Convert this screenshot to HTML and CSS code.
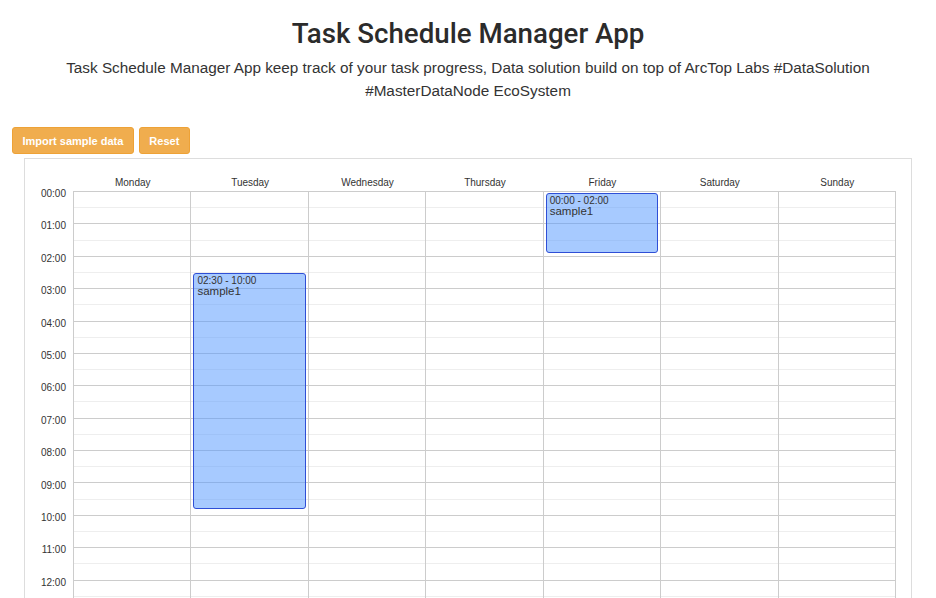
FILE: index.html
```html
<!DOCTYPE html>
<html lang="en">
<head>
<meta charset="utf-8">
<title>Task Schedule Manager App</title>
<link rel="stylesheet" href="styles.css">
</head>
<body>
<div class="page">
  <header class="intro">
    <h1 class="title">Task Schedule Manager App</h1>
    <p class="subtitle">Task Schedule Manager App keep track of your task progress, Data solution build on top of ArcTop Labs #DataSolution #MasterDataNode EcoSystem</p>
  </header>
  <div class="toolbar">
    <button class="btn btn-warning">Import sample data</button>
    <button class="btn btn-warning">Reset</button>
  </div>
  <section class="calendar">
    <div class="cal-head">
      <div class="corner"></div>
      <div class="day-names">
        <div class="day-name">Monday</div>
        <div class="day-name">Tuesday</div>
        <div class="day-name">Wednesday</div>
        <div class="day-name">Thursday</div>
        <div class="day-name">Friday</div>
        <div class="day-name">Saturday</div>
        <div class="day-name">Sunday</div>
      </div>
    </div>
    <div class="cal-body">
      <div class="times" id="times"></div>
      <div class="days" id="days"></div>
    </div>
  </section>
</div>
<script src="app.js"></script>
</body>
</html>
```
FILE: styles.css
```css
* { box-sizing: border-box; }
html, body { margin: 0; padding: 0; background: #fff; }
body {
  font-family: "Liberation Sans", Arial, Helvetica, sans-serif;
  color: #333;
}
.page { padding: 0 12px; }
.intro { text-align: center; }
.title {
  margin: 18px 0 0;
  font-family: Roboto, "Liberation Sans", sans-serif;
  font-weight: 500;
  font-size: 27.7px;
  line-height: 31px;
  color: #2b2b2b;
}
.subtitle {
  margin: 7px 0 0;
  font-size: 15.3px;
  line-height: 23px;
  color: #333;
}
.toolbar {
  margin-top: 25px;
  display: flex;
  gap: 5px;
}
.btn {
  height: 27px;
  padding: 0 9.5px;
  font-family: "Liberation Sans", Arial, sans-serif;
  font-size: 11px;
  font-weight: 700;
  color: #fff;
  border-radius: 3px;
  cursor: pointer;
}
.btn-warning {
  background: #f0ad4e;
  border: 1px solid #eea236;
}
.calendar {
  margin: 4px 12px 0;
  border: 1px solid #ddd;
  border-bottom: none;
  padding-right: 15px;
}
.cal-head {
  display: flex;
  height: 32px;
}
.corner { width: 49px; flex: none; }
.day-names {
  flex: 1;
  display: grid;
  grid-template-columns: repeat(7, 1fr);
  align-items: end;
  padding-bottom: 2px;
}
.day-name {
  text-align: center;
  font-size: 10px;
  line-height: 12px;
  color: #333;
}
.cal-body {
  display: flex;
}
.times {
  width: 48px;
  flex: none;
  margin-top: -3px;
}
.time-label {
  height: 32.4px;
  padding-right: 7px;
  text-align: right;
  font-size: 10px;
  line-height: 12px;
  color: #333;
}
.days {
  flex: 1;
  display: grid;
  grid-template-columns: repeat(7, 1fr);
  border-top: 1px solid #ccc;
  border-left: 1px solid #ccc;
}
.day-col {
  position: relative;
  border-right: 1px solid #ccc;
}
.slot {
  height: 16.2px;
  border-bottom: 1px solid #eee;
}
.slot.hour-end { border-bottom-color: #ccc; }
.event {
  position: absolute;
  left: 2px;
  right: 2px;
  background: rgba(80, 150, 255, 0.5);
  border: 1px solid #2f4fd6;
  border-radius: 3px;
  padding: 1px 3px;
  color: #333;
  overflow: hidden;
}
.event-time { font-size: 10px; line-height: 11px; }
.event-title { font-size: 11.5px; line-height: 11px; }
```
FILE: app.js
```js
(function () {
  var times = document.getElementById('times');
  var days = document.getElementById('days');
  var pad = function (n) { return (n < 10 ? '0' : '') + n; };
  for (var h = 0; h < 13; h++) {
    var t = document.createElement('div');
    t.className = 'time-label';
    t.textContent = pad(h) + ':00';
    times.appendChild(t);
  }
  var events = {
    1: [{ start: '02:30', end: '10:00', title: 'sample1', top: 81, height: 236 }],
    4: [{ start: '00:00', end: '02:00', title: 'sample1', top: 1, height: 60 }]
  };
  for (var d = 0; d < 7; d++) {
    var col = document.createElement('div');
    col.className = 'day-col';
    for (var s = 0; s < 13 * 2; s++) {
      var slot = document.createElement('div');
      slot.className = 'slot' + (s % 2 === 1 ? ' hour-end' : '');
      col.appendChild(slot);
    }
    (events[d] || []).forEach(function (ev) {
      var e = document.createElement('div');
      e.className = 'event';
      e.style.top = ev.top + 'px';
      e.style.height = ev.height + 'px';
      var tm = document.createElement('div');
      tm.className = 'event-time';
      tm.textContent = ev.start + ' - ' + ev.end;
      var ti = document.createElement('div');
      ti.className = 'event-title';
      ti.textContent = ev.title;
      e.appendChild(tm);
      e.appendChild(ti);
      col.appendChild(e);
    });
    days.appendChild(col);
  }
})();
```
